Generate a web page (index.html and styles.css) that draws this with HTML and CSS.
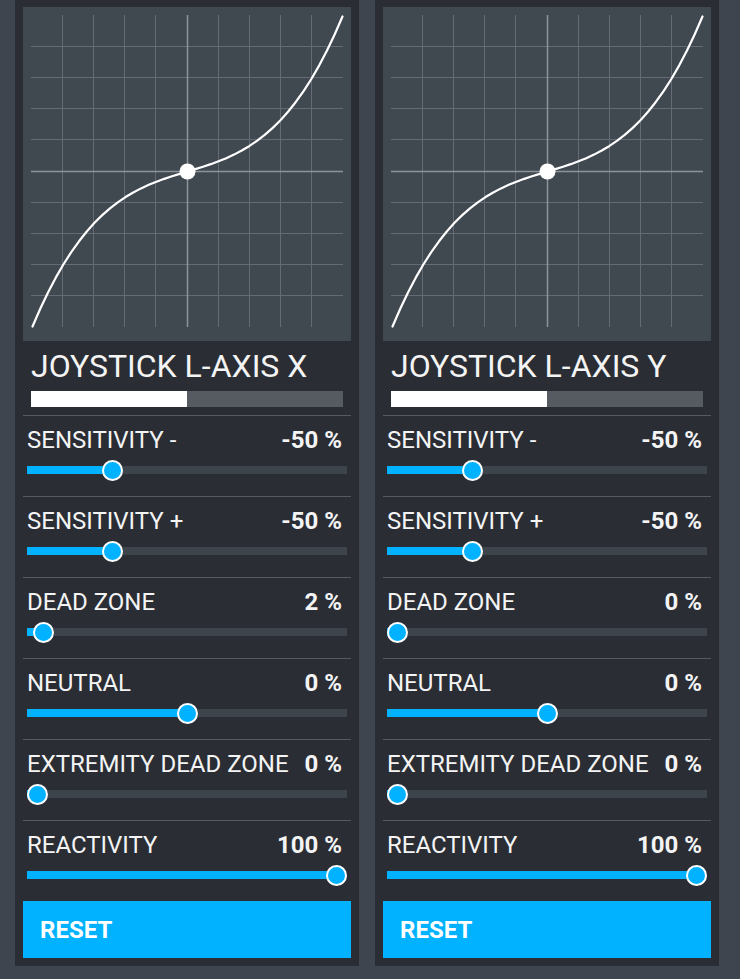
FILE: index.html
```html
<!DOCTYPE html>
<html lang="en">
  <head>
    <meta charset="UTF-8" />
    <meta name="viewport" content="width=device-width, initial-scale=1.0" />
    <title>Joystick Curves</title>
    <link rel="stylesheet" href="styles.css">
  </head>
  <body>
    <div class="axis-panels">
      <div class="axis-panel">
        <div class="curve-box">
          <svg class="curve" width="328" height="334" viewBox="0 0 328 334">
            <g class="grid-line">
              <line x1="39.5" y1="8" x2="39.5" y2="320" />
              <line x1="70.5" y1="8" x2="70.5" y2="320" />
              <line x1="101.5" y1="8" x2="101.5" y2="320" />
              <line x1="132.5" y1="8" x2="132.5" y2="320" />
              <line x1="195.5" y1="8" x2="195.5" y2="320" />
              <line x1="226.5" y1="8" x2="226.5" y2="320" />
              <line x1="257.5" y1="8" x2="257.5" y2="320" />
              <line x1="288.5" y1="8" x2="288.5" y2="320" />
              <line x1="8" y1="39.5" x2="320" y2="39.5" />
              <line x1="8" y1="70.5" x2="320" y2="70.5" />
              <line x1="8" y1="101.5" x2="320" y2="101.5" />
              <line x1="8" y1="132.5" x2="320" y2="132.5" />
              <line x1="8" y1="195.5" x2="320" y2="195.5" />
              <line x1="8" y1="226.5" x2="320" y2="226.5" />
              <line x1="8" y1="257.5" x2="320" y2="257.5" />
              <line x1="8" y1="288.5" x2="320" y2="288.5" />
            </g>
            <g class="grid-axis">
              <line x1="164.5" y1="8" x2="164.5" y2="320" />
              <line x1="8" y1="164.5" x2="320" y2="164.5" />
            </g>
            <polyline class="curve-line" points="9.5,319.5 17.25,301.7 25,285.45 32.75,270.66 40.5,257.25 48.25,245.15 56,234.27 63.75,224.52 71.5,215.84 79.25,208.13 87,201.31 94.75,195.31 102.5,190.04 110.25,185.43 118,181.38 125.75,177.82 133.5,174.67 141.25,171.84 149,169.26 156.75,166.84 164.5,164.5 172.25,162.16 180,159.74 187.75,157.16 195.5,154.33 203.25,151.18 211,147.62 218.75,143.57 226.5,138.96 234.25,133.69 242,127.69 249.75,120.87 257.5,113.16 265.25,104.48 273,94.73 280.75,83.85 288.5,71.75 296.25,58.34 304,43.55 311.75,27.3 319.5,9.5" />
            <circle class="curve-point" cx="164.5" cy="164.5" r="8" />
          </svg>
        </div>
        <div class="axis-head">
          <h2 class="axis-title">JOYSTICK L-AXIS X</h2>
          <div class="axis-meter"><div class="axis-meter-fill"></div></div>
        </div>
        <div class="setting">
          <div class="setting-head"><span>SENSITIVITY -</span><b>-50 %</b></div>
          <div class="slider" style="--p: 0.25"><div class="slider-fill"></div><div class="slider-thumb"></div></div>
        </div>
        <div class="setting">
          <div class="setting-head"><span>SENSITIVITY +</span><b>-50 %</b></div>
          <div class="slider" style="--p: 0.25"><div class="slider-fill"></div><div class="slider-thumb"></div></div>
        </div>
        <div class="setting">
          <div class="setting-head"><span>DEAD ZONE</span><b>2 %</b></div>
          <div class="slider" style="--p: 0.02"><div class="slider-fill"></div><div class="slider-thumb"></div></div>
        </div>
        <div class="setting">
          <div class="setting-head"><span>NEUTRAL</span><b>0 %</b></div>
          <div class="slider" style="--p: 0.5"><div class="slider-fill"></div><div class="slider-thumb"></div></div>
        </div>
        <div class="setting">
          <div class="setting-head"><span>EXTREMITY DEAD ZONE</span><b>0 %</b></div>
          <div class="slider" style="--p: 0"><div class="slider-fill"></div><div class="slider-thumb"></div></div>
        </div>
        <div class="setting">
          <div class="setting-head"><span>REACTIVITY</span><b>100 %</b></div>
          <div class="slider" style="--p: 1"><div class="slider-fill"></div><div class="slider-thumb"></div></div>
        </div>
        <button class="reset-button">RESET</button>
      </div>

      <div class="axis-panel">
        <div class="curve-box">
          <svg class="curve" width="328" height="334" viewBox="0 0 328 334">
            <g class="grid-line">
              <line x1="39.5" y1="8" x2="39.5" y2="320" />
              <line x1="70.5" y1="8" x2="70.5" y2="320" />
              <line x1="101.5" y1="8" x2="101.5" y2="320" />
              <line x1="132.5" y1="8" x2="132.5" y2="320" />
              <line x1="195.5" y1="8" x2="195.5" y2="320" />
              <line x1="226.5" y1="8" x2="226.5" y2="320" />
              <line x1="257.5" y1="8" x2="257.5" y2="320" />
              <line x1="288.5" y1="8" x2="288.5" y2="320" />
              <line x1="8" y1="39.5" x2="320" y2="39.5" />
              <line x1="8" y1="70.5" x2="320" y2="70.5" />
              <line x1="8" y1="101.5" x2="320" y2="101.5" />
              <line x1="8" y1="132.5" x2="320" y2="132.5" />
              <line x1="8" y1="195.5" x2="320" y2="195.5" />
              <line x1="8" y1="226.5" x2="320" y2="226.5" />
              <line x1="8" y1="257.5" x2="320" y2="257.5" />
              <line x1="8" y1="288.5" x2="320" y2="288.5" />
            </g>
            <g class="grid-axis">
              <line x1="164.5" y1="8" x2="164.5" y2="320" />
              <line x1="8" y1="164.5" x2="320" y2="164.5" />
            </g>
            <polyline class="curve-line" points="9.5,319.5 17.25,301.7 25,285.45 32.75,270.66 40.5,257.25 48.25,245.15 56,234.27 63.75,224.52 71.5,215.84 79.25,208.13 87,201.31 94.75,195.31 102.5,190.04 110.25,185.43 118,181.38 125.75,177.82 133.5,174.67 141.25,171.84 149,169.26 156.75,166.84 164.5,164.5 172.25,162.16 180,159.74 187.75,157.16 195.5,154.33 203.25,151.18 211,147.62 218.75,143.57 226.5,138.96 234.25,133.69 242,127.69 249.75,120.87 257.5,113.16 265.25,104.48 273,94.73 280.75,83.85 288.5,71.75 296.25,58.34 304,43.55 311.75,27.3 319.5,9.5" />
            <circle class="curve-point" cx="164.5" cy="164.5" r="8" />
          </svg>
        </div>
        <div class="axis-head">
          <h2 class="axis-title">JOYSTICK L-AXIS Y</h2>
          <div class="axis-meter"><div class="axis-meter-fill"></div></div>
        </div>
        <div class="setting">
          <div class="setting-head"><span>SENSITIVITY -</span><b>-50 %</b></div>
          <div class="slider" style="--p: 0.25"><div class="slider-fill"></div><div class="slider-thumb"></div></div>
        </div>
        <div class="setting">
          <div class="setting-head"><span>SENSITIVITY +</span><b>-50 %</b></div>
          <div class="slider" style="--p: 0.25"><div class="slider-fill"></div><div class="slider-thumb"></div></div>
        </div>
        <div class="setting">
          <div class="setting-head"><span>DEAD ZONE</span><b>0 %</b></div>
          <div class="slider" style="--p: 0"><div class="slider-fill"></div><div class="slider-thumb"></div></div>
        </div>
        <div class="setting">
          <div class="setting-head"><span>NEUTRAL</span><b>0 %</b></div>
          <div class="slider" style="--p: 0.5"><div class="slider-fill"></div><div class="slider-thumb"></div></div>
        </div>
        <div class="setting">
          <div class="setting-head"><span>EXTREMITY DEAD ZONE</span><b>0 %</b></div>
          <div class="slider" style="--p: 0"><div class="slider-fill"></div><div class="slider-thumb"></div></div>
        </div>
        <div class="setting">
          <div class="setting-head"><span>REACTIVITY</span><b>100 %</b></div>
          <div class="slider" style="--p: 1"><div class="slider-fill"></div><div class="slider-thumb"></div></div>
        </div>
        <button class="reset-button">RESET</button>
      </div>
    </div>
  </body>
</html>
```
FILE: styles.css
```css
:root {
  --page: #3e454e; /* outer background */
  --panel: #2a2e34; /* panel */
  --chart: #404850; /* curve area */
  --accent: #00b2ff; /* bright blue */
  --track: #3e444b;
  --text: #f4f4f4;
}

* {
  margin: 0;
  padding: 0;
  box-sizing: border-box;
  font-family: Roboto, "Liberation Sans", sans-serif;
}

body {
  background: var(--page);
  width: 740px;
  height: 979px;
  overflow: hidden;
}

.axis-panels {
  display: flex;
  gap: 16px;
  padding: 0 21px 0 15px;
}

.axis-panel {
  width: 344px;
  background: var(--panel);
  padding: 7px 8px 8px;
  display: flex;
  flex-direction: column;
}

.curve-box {
  height: 334px;
  background: var(--chart);
}

.curve {
  display: block;
}

.grid-line line {
  stroke: #646b74;
  stroke-width: 1;
}

.grid-axis line {
  stroke: #8d939a;
  stroke-width: 1.5;
}

.curve-line {
  fill: none;
  stroke: #ffffff;
  stroke-width: 2.2;
  stroke-linejoin: round;
  stroke-linecap: round;
}

.curve-point {
  fill: #ffffff;
}

.axis-head {
  padding: 7px 8px 8px;
  border-bottom: 1px solid #555a61;
}

.axis-title {
  font-size: 32px;
  line-height: 36px;
  font-weight: 400;
  color: var(--text);
}

.axis-meter {
  margin-top: 7px;
  height: 16px;
  background: #565b61;
}

.axis-meter-fill {
  width: 50%;
  height: 100%;
  background: #ffffff;
}

.setting {
  padding: 10px 4px 22px;
  border-bottom: 1px solid #555a61;
}

.setting-head {
  display: flex;
  justify-content: space-between;
  align-items: baseline;
  padding-right: 5px;
  font-size: 24px;
  line-height: 28px;
  color: var(--text);
}

.setting-head b {
  font-weight: 700;
}

.slider {
  position: relative;
  height: 8px;
  margin-top: 12px;
  background: var(--track);
}

.slider-fill {
  height: 100%;
  width: calc(var(--p) * (100% - 21px) + 10.5px);
  background: var(--accent);
}

.slider-thumb {
  position: absolute;
  top: 50%;
  left: calc(var(--p) * (100% - 21px));
  width: 21px;
  height: 21px;
  margin-top: -10.5px;
  border-radius: 50%;
  border: 2px solid #ffffff;
  background: var(--accent);
}

.setting:last-of-type {
  border-bottom: none;
}

.reset-button {
  height: 57px;
  border: none;
  background: var(--accent);
  color: #ffffff;
  font-size: 24px;
  font-weight: 700;
  text-align: left;
  padding: 0 17px;
}
```
